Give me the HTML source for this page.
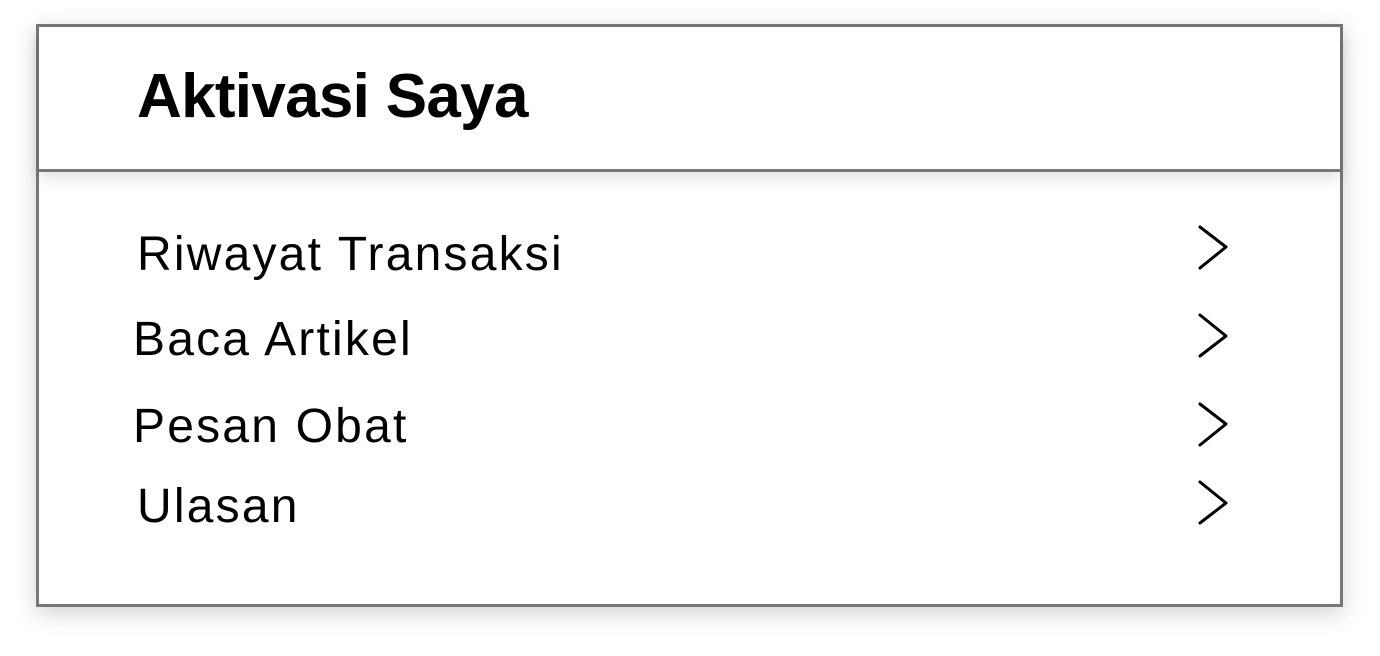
<!DOCTYPE html>
<html><head><meta charset="utf-8"><style>
html,body{margin:0;padding:0;background:#fff;width:1380px;height:656px;overflow:hidden}
body{font-family:"Liberation Sans",sans-serif;color:#000;position:relative}
.box{position:absolute;left:36px;top:24px;width:1301px;height:577px;border:3px solid #777;background:#fff;box-shadow:0 6px 22px rgba(0,0,0,.18)}
.hdr{position:absolute;left:0;top:0;width:100%;height:142px;border-bottom:3px solid #777;box-shadow:0 6px 14px rgba(0,0,0,.12)}
.h{position:absolute;left:98px;top:70px;line-height:0;font-weight:bold;font-size:62px;letter-spacing:-0.7px;white-space:nowrap}
.t{position:absolute;line-height:0;font-size:48px;letter-spacing:2.2px;white-space:nowrap}
svg{position:absolute}
</style></head><body>
<div class="box"><div class="hdr"><div class="h">Aktivasi Saya</div></div></div>
<div class="t" style="left:137px;top:255px">Riwayat Transaksi</div>
<div class="t" style="left:133px;top:340px">Baca Artikel</div>
<div class="t" style="left:133px;top:427px">Pesan Obat</div>
<div class="t" style="left:137px;top:507px">Ulasan</div>
<svg width="1380" height="656" style="left:0;top:0">
<g fill="none" stroke="#000" stroke-width="3" stroke-linecap="round" stroke-linejoin="round">
<path d="M1200 227L1226 247L1200 268"/>
<path d="M1200 315L1226 336L1200 356"/>
<path d="M1200 404L1226 424L1200 445"/>
<path d="M1200 482L1226 503L1200 523"/>
</g></svg>
</body></html>
